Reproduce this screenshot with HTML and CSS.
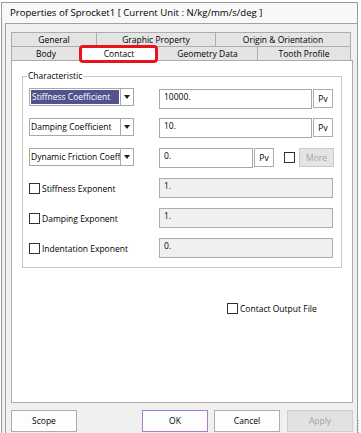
FILE: index.html
```html
<!DOCTYPE html>
<html lang="en">
<head>
  <meta charset="UTF-8" />
  <title>Properties of Sprocket1</title>
  <link rel="stylesheet" href="styles.css">
</head>
<body>
  <div class="window">
    <div class="titlebar">Properties of Sprocket1 [ Current Unit : N/kg/mm/s/deg ]</div>

    <div class="client">
      <!-- Tab headers, two rows -->
      <div class="tab-row">
        <div class="tab" style="width:86px">General</div>
        <div class="tab" style="width:120px">Graphic Property</div>
        <div class="tab" style="width:136px">Origin &amp; Orientation</div>
      </div>
      <div class="tab-row second">
        <div class="tab" style="width:70px">Body</div>
        <div class="tab active" style="width:78px">Contact<span class="highlight"></span></div>
        <div class="tab" style="width:101px">Geometry Data</div>
        <div class="tab" style="width:94px">Tooth Profile</div>
      </div>

      <div class="panel">
        <fieldset class="group">
          <legend>Characteristic</legend>

          <div class="row">
            <div class="combo">
              <div class="combo-text"><span class="selected">Stiffness Coefficient</span></div>
              <div class="combo-arrow"></div>
            </div>
            <div class="field top1" style="width:153px">10000.</div>
            <div class="pv top1">Pv</div>
          </div>

          <div class="row">
            <div class="combo">
              <div class="combo-text">Damping Coefficient</div>
              <div class="combo-arrow"></div>
            </div>
            <div class="field" style="width:153px">10.</div>
            <div class="pv">Pv</div>
          </div>

          <div class="row">
            <div class="combo">
              <div class="combo-text">Dynamic Friction Coefficient</div>
              <div class="combo-arrow"></div>
            </div>
            <div class="field" style="width:94px">0.</div>
            <div class="pv">Pv</div>
            <span class="check more-check"></span>
            <div class="btn-more">More</div>
          </div>

          <div class="row centered">
            <label class="check-label"><span class="check"></span>Stiffness Exponent</label>
            <div class="field disabled" style="width:174px">1.</div>
          </div>

          <div class="row centered">
            <label class="check-label"><span class="check"></span>Damping Exponent</label>
            <div class="field disabled" style="width:174px">1.</div>
          </div>

          <div class="row centered">
            <label class="check-label"><span class="check"></span>Indentation Exponent</label>
            <div class="field disabled" style="width:174px">0.</div>
          </div>
        </fieldset>

        <label class="check-label output"><span class="check"></span>Contact Output File</label>
      </div>

      <div class="buttons">
        <div class="btn">Scope</div>
        <div class="spacer"></div>
        <div class="btn default">OK</div>
        <div class="btn">Cancel</div>
        <div class="btn disabled">Apply</div>
      </div>
    </div>

    <div class="grip"></div>
  </div>
</body>
</html>
```

FILE: styles.css
```css
body {
  margin: 0;
  padding: 0;
  background: #ffffff;
  font-family: 'Open Sans', 'Noto Sans', sans-serif;
  font-size: 8.5px;
  color: #000;
  overflow: hidden;
}

.window {
  position: relative;
  margin: 2px 0 0 1px;
  width: 357px;
  height: 431px;
  box-sizing: border-box;
  border: 1px solid #9a9a9a;
  border-bottom: none;
  background: #f0f0f0;
}

.titlebar {
  height: 20px;
  line-height: 20px;
  padding-left: 8px;
  font-size: 9.6px;
  background: #f8f8f8;
}

.client {
  margin-left: 3px;
  height: 410px;
  box-sizing: border-box;
  border-top: 1px solid #a0a0a0;
  border-left: 1px solid #a0a0a0;
  padding: 8px 0 0 5px;
}

/* tabs */
.tab-row {
  display: flex;
}

.tab-row.second {
  margin-top: -1px;
}

.tab {
  position: relative;
  height: 15px;
  line-height: 13px;
  box-sizing: border-box;
  border: 1px solid #acacac;
  margin-left: -1px;
  background: #e4e4e4;
  text-align: center;
  white-space: nowrap;
}

.tab:first-child {
  margin-left: 0;
}

.tab.active {
  background: #fff;
  border-bottom-color: #fff;
  z-index: 2;
}

.highlight {
  position: absolute;
  left: -2px;
  top: -2px;
  right: -1px;
  bottom: -3px;
  border: 3px solid #e8141c;
  border-radius: 4px;
}

.panel {
  width: 342px;
  height: 343px;
  box-sizing: border-box;
  margin-top: -1px;
  border: 1px solid #adadad;
  background: #fff;
}

/* group box */
.group {
  margin: 9px 0 0 10px;
  width: 320px;
  box-sizing: border-box;
  border: 1px solid #c9c9c9;
  padding: 6px 0 9px 6px;
}

.group legend {
  padding: 0 1px;
  margin-left: -2px;
  line-height: 12px;
}

.row {
  display: flex;
  align-items: flex-start;
  height: 20px;
  margin-bottom: 10px;
}

.row:last-child {
  margin-bottom: 0;
}

.row.centered {
  align-items: center;
}

.combo {
  display: flex;
  width: 105px;
  height: 18px;
  box-sizing: border-box;
  border: 1px solid #a8a8a8;
  background: #fff;
  margin-right: 25px;
}

.combo-text {
  flex: 1;
  padding: 1px 1px;
  line-height: 14px;
  overflow: hidden;
  white-space: nowrap;
}

.selected {
  display: block;
  background: #52528f;
  color: #fff;
  padding-left: 1px;
}

.combo-arrow {
  position: relative;
  width: 12px;
  border-left: 1px solid #a8a8a8;
}

.combo-arrow::after {
  content: "";
  position: absolute;
  left: 3px;
  top: 6px;
  border-left: 3px solid transparent;
  border-right: 3px solid transparent;
  border-top: 4px solid #222;
}

.field {
  height: 20px;
  box-sizing: border-box;
  border: 1px solid #a8a8a8;
  background: #fff;
  padding: 1px 4px;
  line-height: 12px;
}

.field.disabled {
  background: #f0f0f0;
  border-color: #acacac;
}

.top1 {
  margin-top: 1px;
}

.pv {
  width: 20px;
  height: 19px;
  box-sizing: border-box;
  margin-left: 1px;
  border: 1px solid #adadad;
  background: #fff;
  text-align: center;
  line-height: 17px;
  font-size: 8.5px;
}

.check {
  display: inline-block;
  width: 11px;
  height: 11px;
  box-sizing: border-box;
  border: 1px solid #333;
  background: #fff;
  vertical-align: middle;
}

.more-check {
  margin: 4px 0 0 10px;
}

.btn-more {
  width: 35px;
  height: 19px;
  box-sizing: border-box;
  margin-left: 4px;
  border: 1px solid #cacaca;
  background: #e4e4e4;
  color: #a6a6a6;
  text-align: center;
  line-height: 17px;
}

.check-label {
  display: flex;
  align-items: center;
  gap: 2px;
  width: 130px;
  white-space: nowrap;
}

.check-label.output {
  width: auto;
  margin: 35px 0 0 215px;
}

/* dialog buttons */
.buttons {
  display: flex;
  width: 342px;
  margin-top: 7px;
}

.spacer {
  flex: 1;
}

.btn {
  width: 66px;
  height: 22px;
  box-sizing: border-box;
  margin-left: 6px;
  border: 1px solid #adadad;
  background: #fdfdfd;
  text-align: center;
  line-height: 20px;
}

.btn:first-child {
  margin-left: 0;
}

.btn.default {
  border-color: #a77fd0;
}

.btn.disabled {
  margin-left: 7px;
  background: #e2e2e2;
  border-color: #cdcdcd;
  color: #a3a3a3;
}

.grip {
  position: absolute;
  right: -3px;
  bottom: 0;
  width: 3px;
  height: 14px;
  background: radial-gradient(circle, #b8b8b8 0.8px, transparent 1px) 0 0 / 3px 3px;
}
```
